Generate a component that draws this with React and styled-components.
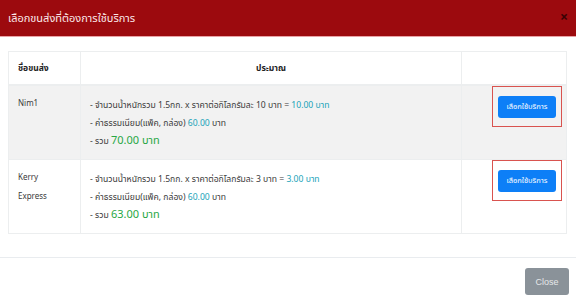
import styled, { createGlobalStyle } from "styled-components";

const GlobalStyle = createGlobalStyle`
  html, body {
    margin: 0;
    padding: 0;
    background: #fff;
    font-family: "Noto Sans Thai", "Liberation Sans", "Noto Sans", sans-serif;
  }
`;

const rows = [
  { name: "Nim1", rate: 10, fee: "60.00", ship: "10.00", total: "70.00", bg: "#f2f2f2" },
  { name: "Kerry Express", rate: 3, fee: "60.00", ship: "3.00", total: "63.00", bg: "#fff" },
];

export default function App() {
  return (
    <Modal>
      <GlobalStyle />
      <Header>
        <Title>เลือกขนส่งที่ต้องการใช้บริการ</Title>
        <CloseX>×</CloseX>
      </Header>
      <Body>
        <Table>
          <colgroup>
            <col style={{ width: 72 }} />
            <col />
            <col style={{ width: 105 }} />
          </colgroup>
          <thead>
            <tr>
              <Th>ชื่อขนส่ง</Th>
              <Th $center>ประมาณ</Th>
              <Th></Th>
            </tr>
          </thead>
          <tbody>
            {rows.map((r, i) => (
              <Row key={i} $bg={r.bg}>
                <NameCell>{r.name}</NameCell>
                <Td>
                  <Line>
                    - จำนวนน้ำหนักรวม 1.5กก. x ราคาต่อกิโลกรัมละ {r.rate} บาท ={" "}
                    <Info>{r.ship} บาท</Info>
                  </Line>
                  <Line>
                    - ค่าธรรมเนียม(แพ็ค, กล่อง) <Info>{r.fee}</Info> บาท
                  </Line>
                  <Line $tight>
                    - รวม <Total>{r.total} บาท</Total>
                  </Line>
                </Td>
                <BtnCell>
                  <Outline>
                    <SelectBtn>เลือกใช้บริการ</SelectBtn>
                  </Outline>
                </BtnCell>
              </Row>
            ))}
          </tbody>
        </Table>
      </Body>
      <Footer>
        <CloseBtn>Close</CloseBtn>
      </Footer>
    </Modal>
  );
}

const Modal = styled.div`
  width: 576px;
  height: 305px;
  display: flex;
  flex-direction: column;
  background: #fff;
  overflow: hidden;
`;

const Header = styled.div`
  height: 36px;
  background: #9c0a0e;
  border-bottom: 1px solid #e9a3a6;
  display: flex;
  align-items: center;
  justify-content: space-between;
  padding: 0 8px 0 8px;
`;

const Title = styled.div`
  color: #fbe9ea;
  font-size: 11px;
`;

const CloseX = styled.div`
  color: #3a0204;
  font-size: 14px;
  font-weight: bold;
  line-height: 1;
`;

const Body = styled.div`
  padding: 14px 9px 0 8px;
  height: 206px;
  border-bottom: 1px solid #e9ecef;
`;

const Table = styled.table`
  width: 100%;
  table-layout: fixed;
  border-collapse: collapse;
  border: 1px solid #eceeef;
  font-size: 8.6px;
  color: #3a3a3a;
`;

const Th = styled.th`
  height: 32px;
  text-align: ${(p) => (p.$center ? "center" : "left")};
  padding: 0 9px;
  font-size: 8.5px;
  font-weight: bold;
  color: #222;
  border: 1px solid #eceeef;
  border-bottom-width: 2px;
`;

const Row = styled.tr`
  background: ${(p) => p.$bg};
`;

const Td = styled.td`
  vertical-align: top;
  padding: 11px 9px 0;
  border: 1px solid #eceeef;
`;

const NameCell = styled(Td)`
  height: 64px;
  line-height: 19px;
  padding-top: 9px;
  padding-right: 14px;
  font-size: 8px;
`;

const BtnCell = styled(Td)`
  padding: 0;
`;

const Line = styled.div`
  line-height: ${(p) => (p.$tight ? "15px" : "18px")};
  white-space: nowrap;
`;

const Info = styled.span`
  color: #17a2b8;
`;

const Total = styled.span`
  color: #28a745;
  font-size: 11px;
`;

const Outline = styled.div`
  margin-left: 30px;
  width: 70px;
  height: 41px;
  border: 1px solid #d9534f;
  display: flex;
  align-items: center;
  justify-content: center;
  box-sizing: border-box;
`;

const SelectBtn = styled.button`
  width: 58px;
  height: 22px;
  border: none;
  border-radius: 3px;
  background: #0d7ff7;
  color: #fff;
  font-family: inherit;
  font-size: 7.5px;
  padding: 0;
`;

const Footer = styled.div`
  flex: 1;
  display: flex;
  align-items: center;
  justify-content: flex-end;
  padding: 0 7px 0 0;
`;

const CloseBtn = styled.button`
  width: 44px;
  height: 27px;
  border: none;
  border-radius: 3px;
  background: #8a9299;
  color: #e6e8ea;
  font-family: "Liberation Sans", sans-serif;
  font-size: 9px;
  padding: 0;
`;
